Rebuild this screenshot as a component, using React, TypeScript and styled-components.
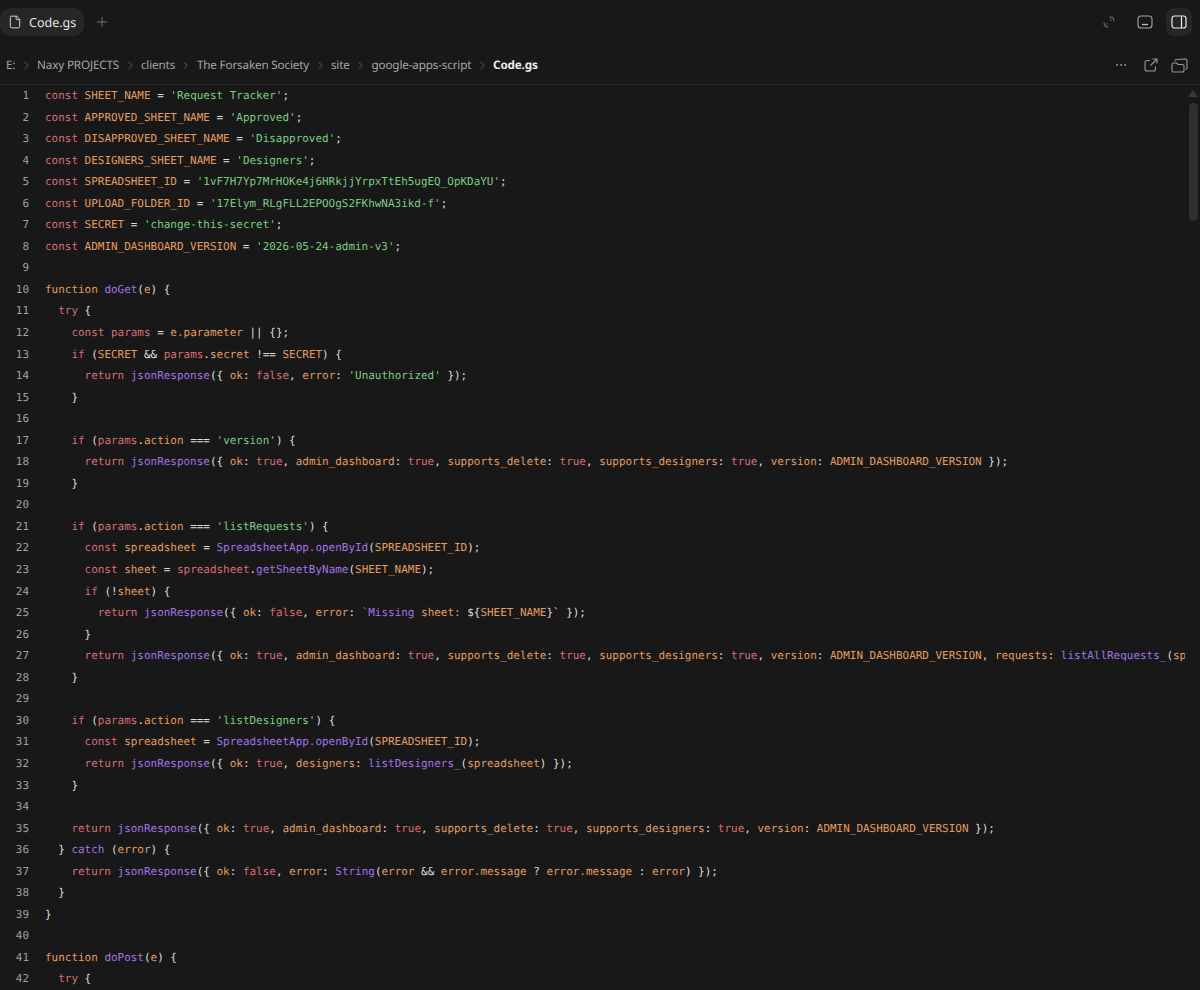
import React from "react";
import styled, { createGlobalStyle } from "styled-components";
import { ChevronRight, Ellipsis, File, Plus } from "lucide-react";

const GlobalStyle = createGlobalStyle`
  html, body {
    margin: 0;
    padding: 0;
    background: #181818;
  }
`;

const Page = styled.div`
  display: flex;
  flex-direction: column;
  width: 1200px;
  height: 990px;
  overflow: hidden;
  background: #181818;
  font-family: "Noto Sans", "Open Sans", sans-serif;
  text-rendering: geometricPrecision;
`;

const TabBar = styled.div`
  display: flex;
  align-items: center;
  justify-content: space-between;
  height: 44px;
  padding: 0 8px 0 0;
  box-sizing: border-box;
`;

const TabGroup = styled.div`
  display: flex;
  align-items: center;
`;

const Tab = styled.div`
  display: flex;
  align-items: center;
  gap: 7px;
  height: 28px;
  width: 84px;
  padding-left: 8px;
  box-sizing: border-box;
  border-radius: 10px;
  background: #262626;
  color: #e4e4e4;
  font-size: 12.5px;
`;

const AddTab = styled.div`
  display: flex;
  margin-left: 10px;
  color: #6e6e6e;
`;

const ToolGroup = styled.div<{ $gap: number }>`
  display: flex;
  align-items: center;
  gap: ${(props) => props.$gap}px;
`;

const ToolButton = styled.div<{ $active?: boolean; $trail?: number }>`
  display: flex;
  align-items: center;
  justify-content: center;
  width: 26px;
  height: 28px;
  margin-right: ${(props) => props.$trail ?? 0}px;
  border-radius: 8px;
  background: ${(props) => (props.$active ? "#262626" : "transparent")};
`;

const PathBar = styled.div`
  display: flex;
  align-items: center;
  justify-content: space-between;
  height: 41px;
  padding: 2px 8px 0 6px;
  box-sizing: border-box;
  border-bottom: 1px solid #2a2a2a;
`;

const Crumbs = styled.div`
  display: flex;
  align-items: center;
`;

const Crumb = styled.span<{ $current?: boolean }>`
  color: ${(props) => (props.$current ? "#ececec" : "#a6a6a6")};
  font-size: 11.7px;
  font-weight: ${(props) => (props.$current ? 700 : 400)};
  letter-spacing: -0.16px;
  white-space: nowrap;
`;

const CrumbArrow = styled.span`
  display: flex;
  justify-content: center;
  width: 21.8px;
  color: #777777;
`;

const Editor = styled.div`
  position: relative;
  flex: 1;
  overflow: hidden;
`;

const Row = styled.div`
  display: flex;
  height: 21.55px;
  line-height: 21.55px;
  font-family: "DejaVu Sans Mono", "Liberation Mono", monospace;
  font-size: 10.96px;
  white-space: pre;
`;

const LineNumber = styled.span`
  flex: none;
  width: 29px;
  margin-right: 16px;
  color: #a0a0a0;
  text-align: right;
`;

const CodeText = styled.span`
  width: 1140px;
  overflow: hidden;
  color: #dedede;
`;

const tokenColors: Record<string, string> = {
  k: "#da6d74",
  o: "#e49c5c",
  s: "#78cc80",
  f: "#a273e6",
};

const Token = styled.span<{ $kind: string }>`
  color: ${(props) => tokenColors[props.$kind]};
`;

const ScrollArrow = styled.div`
  position: absolute;
  top: 5px;
  right: 2px;
  width: 0;
  height: 0;
  border-left: 5px solid transparent;
  border-right: 5px solid transparent;
  border-bottom: 7px solid #3a3a3a;
`;

const ScrollThumb = styled.div`
  position: absolute;
  top: 18px;
  right: 2px;
  width: 9px;
  height: 118px;
  border-radius: 5px;
  background: #2f2f2f;
`;

// [x|text] marks a coloured token: k red, o orange, s green, f purple
const source = [
  "[k|const] [o|SHEET_NAME] = [s|'Request Tracker'];",
  "[k|const] [o|APPROVED_SHEET_NAME] = [s|'Approved'];",
  "[k|const] [o|DISAPPROVED_SHEET_NAME] = [s|'Disapproved'];",
  "[k|const] [o|DESIGNERS_SHEET_NAME] = [s|'Designers'];",
  "[k|const] [o|SPREADSHEET_ID] = [s|'1vF7H7Yp7MrHOKe4j6HRkjjYrpxTtEh5ugEQ_OpKDaYU'];",
  "[k|const] [o|UPLOAD_FOLDER_ID] = [s|'17Elym_RLgFLL2EPOOgS2FKhwNA3ikd-f'];",
  "[k|const] [o|SECRET] = [s|'change-this-secret'];",
  "[k|const] [o|ADMIN_DASHBOARD_VERSION] = [s|'2026-05-24-admin-v3'];",
  "",
  "[o|function] [f|doGet]([o|e]) {",
  "  [k|try] {",
  "    [k|const] [k|params] = [o|e.parameter] || {};",
  "    [k|if] ([o|SECRET] && [k|params].[o|secret] !== [o|SECRET]) {",
  "      [k|return] [f|jsonResponse]({ [o|ok]: [k|false], [o|error]: [s|'Unauthorized'] });",
  "    }",
  "",
  "    [k|if] ([k|params].[o|action] === [s|'version']) {",
  "      [k|return] [f|jsonResponse]({ [o|ok]: [k|true], [o|admin_dashboard]: [k|true], [o|supports_delete]: [k|true], [o|supports_designers]: [k|true], [o|version]: [o|ADMIN_DASHBOARD_VERSION] });",
  "    }",
  "",
  "    [k|if] ([k|params].[o|action] === [s|'listRequests']) {",
  "      [k|const] [o|spreadsheet] = [f|SpreadsheetApp.openById]([o|SPREADSHEET_ID]);",
  "      [k|const] [o|sheet] = [k|spreadsheet].[f|getSheetByName]([o|SHEET_NAME]);",
  "      [k|if] (![o|sheet]) {",
  "        [k|return] [f|jsonResponse]({ [o|ok]: [k|false], [o|error]: [f|`Missing] [o|sheet:] ${[o|SHEET_NAME]}` });",
  "      }",
  "      [k|return] [f|jsonResponse]({ [o|ok]: [k|true], [o|admin_dashboard]: [k|true], [o|supports_delete]: [k|true], [o|supports_designers]: [k|true], [o|version]: [o|ADMIN_DASHBOARD_VERSION], [o|requests]: [f|listAllRequests_]([o|sp]",
  "    }",
  "",
  "    [k|if] ([k|params].[o|action] === [s|'listDesigners']) {",
  "      [k|const] [o|spreadsheet] = [f|SpreadsheetApp.openById]([o|SPREADSHEET_ID]);",
  "      [k|return] [f|jsonResponse]({ [o|ok]: [k|true], [o|designers]: [f|listDesigners_]([o|spreadsheet]) });",
  "    }",
  "",
  "    [k|return] [f|jsonResponse]({ [o|ok]: [k|true], [o|admin_dashboard]: [k|true], [o|supports_delete]: [k|true], [o|supports_designers]: [k|true], [o|version]: [o|ADMIN_DASHBOARD_VERSION] });",
  "  } [f|catch] ([o|error]) {",
  "    [k|return] [f|jsonResponse]({ [o|ok]: [k|false], [o|error]: [f|String]([o|error] && [o|error.message] ? [o|error.message] : [o|error]) });",
  "  }",
  "}",
  "",
  "[o|function] [f|doPost]([o|e]) {",
  "  [k|try] {",
];

const crumbs = [
  "E:",
  "Naxy PROJECTS",
  "clients",
  "The Forsaken Society",
  "site",
  "google-apps-script",
];

const renderLine = (line: string) =>
  line.split(/(\[[kosf]\|[^\]]*\])/).map((part, i) =>
    part.startsWith("[") ? (
      <Token key={i} $kind={part[1]}>
        {part.slice(3, -1)}
      </Token>
    ) : (
      part
    ),
  );

const ResizeIcon = () => (
  <svg width="12" height="12" viewBox="0 0 12 12" fill="none" stroke="#5c5c5c" strokeWidth="1.4">
    <path d="M6.500 1.200h1.300a3 3 0 0 1 3 3v1.300M8.500 3.500l-1 1" />
    <path d="M5.500 10.800h-1.300a3 3 0 0 1-3-3v-1.300M3.500 8.500l1-1" />
  </svg>
);

const PanelBottomIcon = () => (
  <svg width="16" height="14" viewBox="0 0 16 14" fill="none" stroke="#a4a4a4" strokeWidth="1.1">
    <rect x="1" y="1" width="14" height="12" rx="3" />
    <path d="M5 9.500h6" stroke="#c4c4c4" strokeWidth="1.300" />
  </svg>
);

const PanelRightIcon = () => (
  <svg width="16" height="14" viewBox="0 0 16 14" fill="none" stroke="#ececec" strokeWidth="1.2">
    <rect x="1" y="1" width="14" height="12" rx="2.500" />
    <path d="M10.500 1v12" />
  </svg>
);

const OpenExternalIcon = () => (
  <svg width="14" height="14" viewBox="0 0 14 14" fill="none" stroke="#969696" strokeWidth="1.1">
    <path d="M6 2.500H3a2 2 0 0 0-2 2v6.500a2 2 0 0 0 2 2h6.500a2 2 0 0 0 2-2V8.500" />
    <path d="M6.500 7.500l6-6M8.500 1h4.500v4.500" />
  </svg>
);

const FoldersIcon = () => (
  <svg width="17" height="15" viewBox="0 0 17 15" fill="none" stroke="#969696" strokeWidth="1.1">
    <path d="M1 6.500a1.500 1.500 0 0 1 1.500-1.500h3l1.500 1.500h4.500a1.500 1.500 0 0 1 1.500 1.500v4.500a1.500 1.500 0 0 1-1.500 1.500h-9a1.500 1.500 0 0 1-1.500-1.500z" />
    <path d="M4 3.200V3a1.500 1.500 0 0 1 1.500-1.500l9-.5a1.500 1.500 0 0 1 1.500 1.500v7.500a1.500 1.500 0 0 1-1.500 1.500" />
  </svg>
);

const App: React.FC = () => (
  <Page>
    <GlobalStyle />
    <TabBar>
      <TabGroup>
        <Tab>
          <File size={14} color="#e0e0e0" strokeWidth={1.5} />
          Code.gs
        </Tab>
        <AddTab>
          <Plus size={16} strokeWidth={1.5} />
        </AddTab>
      </TabGroup>
      <ToolGroup $gap={8}>
        <ToolButton $trail={2}>
          <ResizeIcon />
        </ToolButton>
        <ToolButton>
          <PanelBottomIcon />
        </ToolButton>
        <ToolButton $active>
          <PanelRightIcon />
        </ToolButton>
      </ToolGroup>
    </TabBar>
    <PathBar>
      <Crumbs>
        {crumbs.map((crumb) => (
          <React.Fragment key={crumb}>
            <Crumb>{crumb}</Crumb>
            <CrumbArrow>
              <ChevronRight size={13} strokeWidth={1.3} />
            </CrumbArrow>
          </React.Fragment>
        ))}
        <Crumb $current>Code.gs</Crumb>
      </Crumbs>
      <ToolGroup $gap={2}>
        <ToolButton $trail={2}>
          <Ellipsis size={14} color="#969696" strokeWidth={1.5} />
        </ToolButton>
        <ToolButton>
          <OpenExternalIcon />
        </ToolButton>
        <ToolButton>
          <FoldersIcon />
        </ToolButton>
      </ToolGroup>
    </PathBar>
    <Editor>
      {source.map((line, i) => (
        <Row key={i}>
          <LineNumber>{i + 1}</LineNumber>
          <CodeText>{renderLine(line)}</CodeText>
        </Row>
      ))}
      <ScrollArrow />
      <ScrollThumb />
    </Editor>
  </Page>
);

export default App;
